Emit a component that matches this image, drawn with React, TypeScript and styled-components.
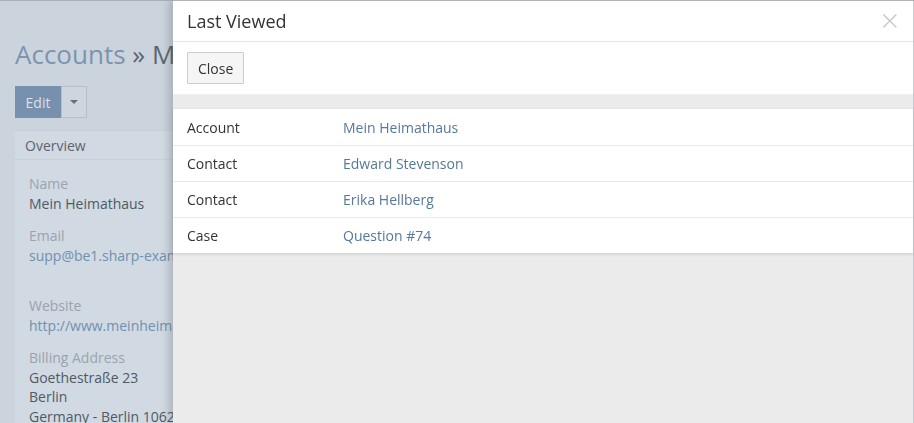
import React from 'react';
import styled, { createGlobalStyle } from 'styled-components';

const GlobalStyle = createGlobalStyle`
  html, body {
    margin: 0;
    padding: 0;
    height: 100%;
    overflow: hidden;
  }
  body {
    font-family: "Open Sans", "Liberation Sans", sans-serif;
    font-size: 14px;
    background: #cbd3dd;
  }
`;

const Page = styled.div`
  height: 423px;
  border-top: 1px solid #a9b0b8;
  box-sizing: border-box;
  padding: 0 15px;
  overflow: hidden;
`;

const Title = styled.h1`
  margin: 36px 0 0;
  font-size: 26px;
  font-weight: 400;
  line-height: 34px;
  color: #5b6571;
  white-space: nowrap;
`;

const TitleLink = styled.span`
  color: #7b94b0;
`;

const ButtonGroup = styled.div`
  display: flex;
  margin-top: 15px;
`;

const EditButton = styled.div`
  width: 46px;
  height: 32px;
  background: #7690ae;
  color: #dae1e9;
  display: flex;
  align-items: center;
  justify-content: center;
  font-size: 14px;
`;

const CaretButton = styled.div`
  width: 24px;
  height: 30px;
  border: 1px solid #b5bec9;
  background: #cdd5de;
  display: flex;
  align-items: center;
  justify-content: center;
  &::after {
    content: '';
    border-left: 4px solid transparent;
    border-right: 4px solid transparent;
    border-top: 4px solid #66707c;
  }
`;

const Card = styled.div`
  margin-top: 12px;
  background: #d1d9e2;
  border-top: 1px solid #c5ced8;
  height: 400px;
`;

const CardHeader = styled.div`
  height: 28px;
  padding: 0 10px;
  display: flex;
  align-items: center;
  color: #5b6571;
  font-size: 14px;
  border-bottom: 1px solid #c8d0da;
`;

const CardBody = styled.div`
  padding: 14px 14px;
`;

const Field = styled.div<{ $gap?: number }>`
  margin-bottom: ${(p) => p.$gap ?? 12}px;
`;

const FieldLabel = styled.div`
  color: #9aa4af;
  line-height: 20px;
`;

const FieldValue = styled.div<{ $link?: boolean }>`
  color: ${(p) => (p.$link ? '#7090b0' : '#4f5965')};
  line-height: 19.5px;
  white-space: nowrap;
`;

const Panel = styled.div`
  position: fixed;
  top: 0;
  left: 173px;
  right: 1px;
  bottom: 0;
  background: #ebebeb;
  border-top: 1px solid #b3b3b3;
  box-shadow: -4px 0 8px rgba(60, 70, 85, 0.25);
  display: flex;
  flex-direction: column;
`;

const PanelTop = styled.div`
  background: #fff;
`;

const PanelHeader = styled.div`
  height: 40px;
  padding: 0 14px;
  display: flex;
  align-items: center;
  justify-content: space-between;
  border-bottom: 1px solid #e5e5e5;
`;

const PanelTitle = styled.h4`
  margin: 0;
  font-size: 18px;
  font-weight: 400;
  color: #333;
`;

const CloseX = styled.span`
  color: #c8c8c8;
  font-size: 32px;
  line-height: 1;
  font-weight: 300;
  margin-top: -2px;
  margin-right: 0;
`;

const PanelFooter = styled.div`
  padding: 10px 14px 10px;
  border-bottom: 1px solid #f0f0f0;
`;

const CloseButton = styled.button`
  font-family: inherit;
  font-size: 14px;
  color: #333;
  background: #f5f5f5;
  border: 1px solid #cccccc;
  border-radius: 1px;
  height: 32px;
  padding: 0 10px;
`;

const Spacer = styled.div`
  height: 14px;
`;

const Table = styled.div`
  background: #fff;
  box-shadow: 0 1px 3px rgba(0, 0, 0, 0.15);
`;

const Row = styled.div`
  display: grid;
  grid-template-columns: 156px 1fr;
  height: 35px;
  align-items: center;
  padding: 0 14px;
  border-top: 1px solid #e8e8e8;
  &:first-child {
    border-top: none;
    height: 36px;
  }
`;

const RowLabel = styled.span`
  color: #333;
`;

const RowLink = styled.span`
  color: #56789b;
`;

const items = [
  { type: 'Account', name: 'Mein Heimathaus' },
  { type: 'Contact', name: 'Edward Stevenson' },
  { type: 'Contact', name: 'Erika Hellberg' },
  { type: 'Case', name: 'Question #74' },
];

export default function App() {
  return (
    <>
      <GlobalStyle />
      <Page>
        <Title>
          <TitleLink>Accounts</TitleLink> » Mein Heimathaus
        </Title>
        <ButtonGroup>
          <EditButton>Edit</EditButton>
          <CaretButton />
        </ButtonGroup>
        <Card>
          <CardHeader>Overview</CardHeader>
          <CardBody>
            <Field>
              <FieldLabel>Name</FieldLabel>
              <FieldValue>Mein Heimathaus</FieldValue>
            </Field>
            <Field $gap={31}>
              <FieldLabel>Email</FieldLabel>
              <FieldValue $link>supp@be1.sharp-example.com</FieldValue>
            </Field>
            <Field>
              <FieldLabel>Website</FieldLabel>
              <FieldValue $link>http://www.meinheimathaus.de</FieldValue>
            </Field>
            <Field>
              <FieldLabel>Billing Address</FieldLabel>
              <FieldValue>Goethestraße 23</FieldValue>
              <FieldValue>Berlin</FieldValue>
              <FieldValue>Germany - Berlin 10625</FieldValue>
            </Field>
          </CardBody>
        </Card>
      </Page>
      <Panel>
        <PanelTop>
          <PanelHeader>
            <PanelTitle>Last Viewed</PanelTitle>
            <CloseX>×</CloseX>
          </PanelHeader>
          <PanelFooter>
            <CloseButton>Close</CloseButton>
          </PanelFooter>
        </PanelTop>
        <Spacer />
        <Table>
          {items.map((item, i) => (
            <Row key={i}>
              <RowLabel>{item.type}</RowLabel>
              <RowLink>{item.name}</RowLink>
            </Row>
          ))}
        </Table>
      </Panel>
    </>
  );
}
